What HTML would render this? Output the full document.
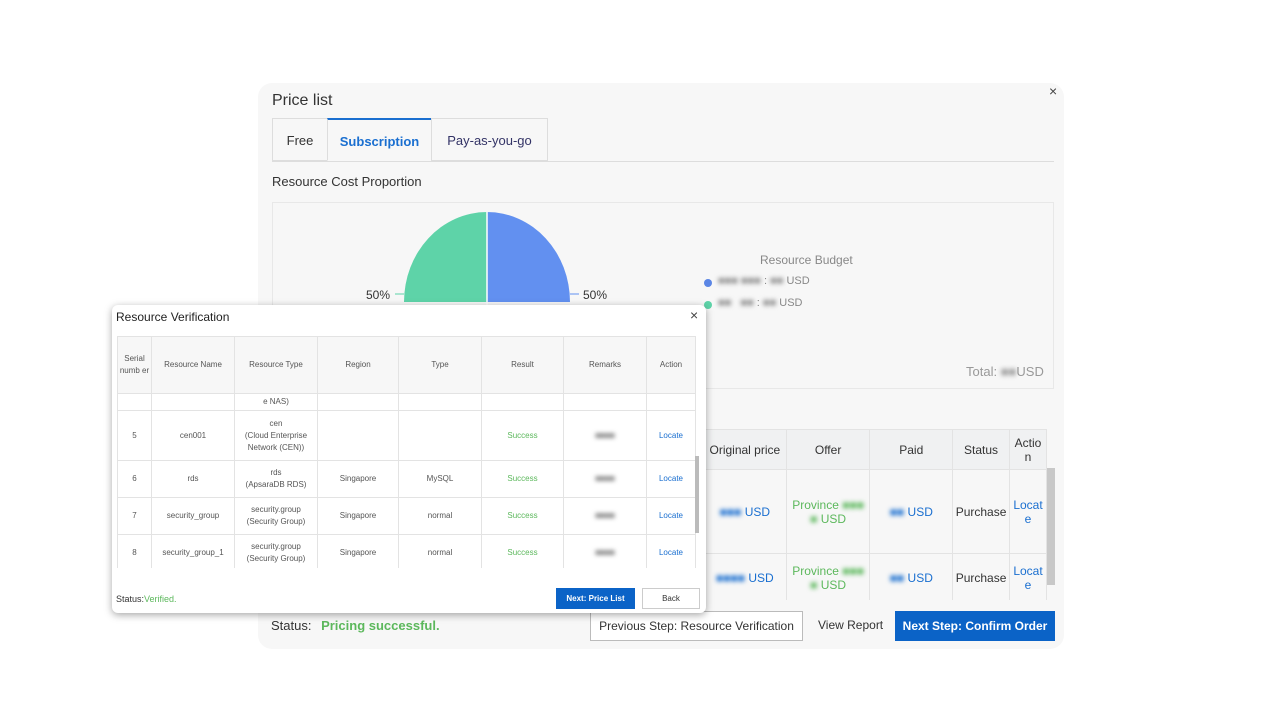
<!DOCTYPE html>
<html><head><meta charset="utf-8"><style>
*{margin:0;padding:0;box-sizing:border-box}
body{width:1280px;height:720px;background:#fff;font-family:"Liberation Sans","Noto Sans CJK SC",sans-serif;position:relative;overflow:hidden;color:#333}
.a{position:absolute}
.main{left:258px;top:83px;width:806px;height:566px;background:#f7f7f7;border-radius:14px}
.blur{filter:blur(2.5px)}
.tab{position:absolute;top:118px;height:43px;border:1px solid #ddd;background:#f7f7f7;font-size:13px;line-height:43px;text-align:center;color:#333}
table{border-collapse:collapse;position:absolute}
td{border:1px solid #e3e3e3;text-align:center;vertical-align:middle}
.pt td{font-size:12px}
.dt td{font-size:8px;color:#555;line-height:12px}
td.g,.g{color:#5cb85c}td.b,.b{color:#1a6fd0}
.dt td.g{color:#5cb85c}.dt td.b{color:#1a6fd0}
.btn{position:absolute;font-size:12px;text-align:center}
</style></head><body>
<div class="a main"></div>
<div class="a" style="left:272px;top:92px;font-size:16px;color:#333">Price list</div>
<div class="a" style="left:1049px;top:83px;font-size:14px;color:#444">×</div>
<div class="a" style="left:272px;top:161px;width:782px;height:1px;background:#ddd"></div>
<div class="tab" style="left:272px;width:56px">Free</div>
<div class="tab" style="left:327px;width:105px;border-top:2px solid #1a6fd0;border-bottom-color:#f7f7f7;color:#1a6fd0;font-weight:bold">Subscription</div>
<div class="tab" style="left:431px;width:117px;color:#336">Pay-as-you-go</div>
<div class="a" style="left:272px;top:174px;font-size:13px">Resource Cost Proportion</div>
<div class="a" style="left:272px;top:202px;width:782px;height:187px;border:1px solid #e8e8e8"></div>
<svg class="a" style="left:360px;top:205px" width="260" height="110">
<path d="M127 7 A83 90 0 0 0 44 97 L127 97Z" fill="#5ed3a8"/>
<path d="M127 7 A83 90 0 0 1 210 97 L127 97Z" fill="#6290f0"/>
<line x1="127" y1="7" x2="127" y2="100" stroke="#fff" stroke-width="1.5"/>
<line x1="35" y1="89" x2="44" y2="89" stroke="#5ed3a8"/>
<line x1="210" y1="89" x2="219" y2="89" stroke="#6290f0"/>
<text x="6" y="94" font-size="12" fill="#333" font-family="Liberation Sans">50%</text>
<text x="223" y="94" font-size="12" fill="#333" font-family="Liberation Sans">50%</text>
</svg>
<div class="a" style="left:760px;top:253px;font-size:12px;color:#888">Resource Budget</div>
<div class="a" style="left:704px;top:279px;width:8px;height:8px;border-radius:50%;background:#5b86e5"></div>
<div class="a" style="left:704px;top:301px;width:8px;height:8px;border-radius:50%;background:#5ed3a8"></div>
<div class="a" style="left:718px;top:275px;font-size:11px;color:#888"><span class="blur">■■■ ■■■</span> : <span class="blur">■■</span> USD</div>
<div class="a" style="left:718px;top:297px;font-size:11px;color:#888"><span class="blur">■■ &nbsp; ■■</span> : <span class="blur">■■</span> USD</div>
<div class="a" style="left:966px;top:364px;font-size:13px;color:#999">Total: <span class="blur">■■</span>USD</div>

<table class="pt" style="left:703px;top:429px;width:344px">
<tr style="height:40px;background:#f0f1f2"><td style="width:83px">Original price</td><td style="width:84px">Offer</td><td style="width:83px">Paid</td><td style="width:57px">Status</td><td style="width:37px">Actio n</td></tr>
<tr style="height:84px"><td class="b"><span class="blur">■■■</span> USD</td><td class="g">Province <span class="blur">■■■</span><br><span class="blur">■</span> USD</td><td class="b"><span class="blur">■■</span> USD</td><td>Purchase</td><td class="b">Locat e</td></tr>
<tr style="height:48px"><td class="b"><span class="blur">■■■■</span> USD</td><td class="g">Province <span class="blur">■■■</span><br><span class="blur">■</span> USD</td><td class="b"><span class="blur">■■</span> USD</td><td>Purchase</td><td class="b">Locat e</td></tr>
</table>
<div class="a" style="left:700px;top:600px;width:360px;height:10px;background:#f7f7f7"></div>
<div class="a" style="left:1047px;top:468px;width:8px;height:117px;background:#c8c8c8"></div>
<div class="a" style="left:271px;top:618px;font-size:13px">Status: <b style="color:#5cb85c;margin-left:6px">Pricing successful.</b></div>
<div class="btn" style="left:590px;top:611px;width:213px;height:30px;line-height:28px;border:1px solid #bbb;background:#fff">Previous Step: Resource Verification</div>
<div class="btn" style="left:818px;top:618px">View Report</div>
<div class="btn" style="left:895px;top:611px;width:160px;height:30px;line-height:30px;background:#0b63c7;color:#fff;font-weight:bold">Next Step: Confirm Order</div>

<div class="a" style="left:112px;top:305px;width:594px;height:308px;background:#fff;border-radius:6px;box-shadow:0 2px 8px rgba(0,0,0,.35)"></div>
<div class="a" style="left:116px;top:310px;font-size:12px;color:#222">Resource Verification</div>
<div class="a" style="left:690px;top:307px;font-size:14px;color:#444">×</div>
<div class="a" style="left:117px;top:336px;width:579px;height:232px;overflow:hidden">
<table class="dt" style="left:0;top:0;width:579px">
<tr style="height:57px;background:#f7f7f7"><td style="width:34px">Serial numb er</td><td style="width:83px">Resource Name</td><td style="width:83px">Resource Type</td><td style="width:81px">Region</td><td style="width:83px">Type</td><td style="width:82px">Result</td><td style="width:83px">Remarks</td><td>Action</td></tr>
<tr style="height:17px"><td></td><td></td><td>e NAS)</td><td></td><td></td><td></td><td></td><td></td></tr>
<tr style="height:50px"><td>5</td><td>cen001</td><td>cen<br>(Cloud Enterprise<br>Network (CEN))</td><td></td><td></td><td class="g">Success</td><td><span class="blur">■■■■</span></td><td class="b">Locate</td></tr>
<tr style="height:37px"><td>6</td><td>rds</td><td>rds<br>(ApsaraDB RDS)</td><td>Singapore</td><td>MySQL</td><td class="g">Success</td><td><span class="blur">■■■■</span></td><td class="b">Locate</td></tr>
<tr style="height:37px"><td>7</td><td>security_group</td><td>security.group<br>(Security Group)</td><td>Singapore</td><td>normal</td><td class="g">Success</td><td><span class="blur">■■■■</span></td><td class="b">Locate</td></tr>
<tr style="height:37px"><td>8</td><td>security_group_1</td><td>security.group<br>(Security Group)</td><td>Singapore</td><td>normal</td><td class="g">Success</td><td><span class="blur">■■■■</span></td><td class="b">Locate</td></tr>
</table></div>
<div class="a" style="left:695px;top:456px;width:4px;height:77px;background:#bbb"></div>
<div class="a" style="left:116px;top:594px;font-size:9px;color:#333">Status:<span class="g">Verified.</span></div>
<div class="btn" style="left:556px;top:588px;width:79px;height:21px;line-height:21px;background:#0b63c7;color:#fff;font-size:8px;font-weight:bold">Next: Price List</div>
<div class="btn" style="left:642px;top:588px;width:58px;height:21px;line-height:19px;border:1px solid #ccc;font-size:8px">Back</div>
</body></html>
